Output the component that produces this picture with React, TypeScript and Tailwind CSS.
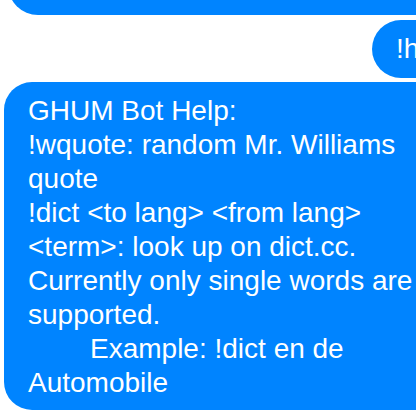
import React from 'react';

const helpText =
  'GHUM Bot Help:\n!wquote: random Mr. Williams quote\n!dict <to lang> <from lang> <term>: look up on dict.cc.\nCurrently only single words are supported.\n\tExample: !dict en de Automobile';

const App: React.FC = () => {
  return (
    <div
      className="w-[416px] h-[416px] overflow-hidden bg-white flex flex-col text-white"
      style={{ fontFamily: '"Liberation Sans", Arial, sans-serif' }}
    >
      {/* previous bubble, mostly scrolled off */}
      <div className="ml-[8px] -mt-[45px] h-[60px] w-[460px] shrink-0 rounded-[30px] bg-[#0084ff]" />

      {/* outgoing command */}
      <div className="ml-[372px] mt-[5px] h-[58px] w-[120px] shrink-0 rounded-[29px] bg-[#0084ff] pl-[24px] flex items-center text-[28px] whitespace-nowrap">
        !help
      </div>

      {/* bot reply */}
      <div className="ml-[4px] mt-[4px] w-[448px] shrink-0 rounded-[28px] bg-[#0084ff] pl-[24px] pr-[24px] pt-[11.5px] pb-[10.5px]">
        <p className="text-[28px] leading-[34px] whitespace-pre-wrap [tab-size:62px]">{helpText}</p>
      </div>
    </div>
  );
};

export default App;
